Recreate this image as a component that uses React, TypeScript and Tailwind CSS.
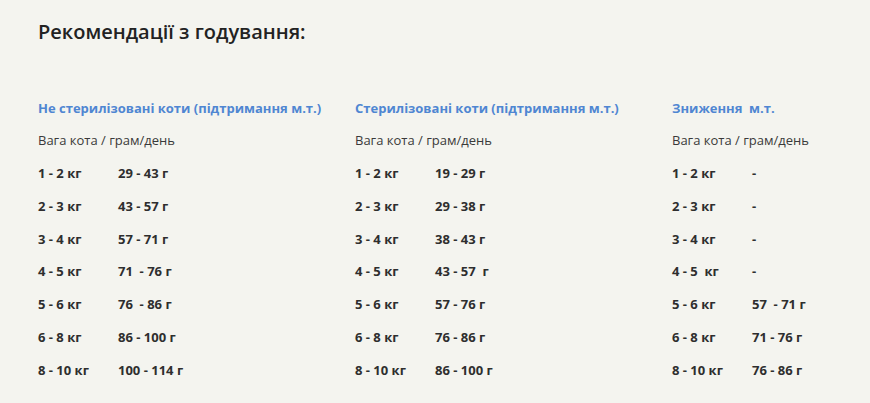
const columns = [
  {
    title: "Не стерилізовані коти (підтримання м.т.)",
    rows: [
      ["1 - 2 кг", "29 - 43 г"],
      ["2 - 3 кг", "43 - 57 г"],
      ["3 - 4 кг", "57 - 71 г"],
      ["4 - 5 кг", "71  - 76 г"],
      ["5 - 6 кг", "76  - 86 г"],
      ["6 - 8 кг", "86 - 100 г"],
      ["8 - 10 кг", "100 - 114 г"],
    ],
  },
  {
    title: "Стерилізовані коти (підтримання м.т.)",
    rows: [
      ["1 - 2 кг", "19 - 29 г"],
      ["2 - 3 кг", "29 - 38 г"],
      ["3 - 4 кг", "38 - 43 г"],
      ["4 - 5 кг", "43 - 57  г"],
      ["5 - 6 кг", "57 - 76 г"],
      ["6 - 8 кг", "76 - 86 г"],
      ["8 - 10 кг", "86 - 100 г"],
    ],
  },
  {
    title: "Зниження  м.т.",
    rows: [
      ["1 - 2 кг", "-"],
      ["2 - 3 кг", "-"],
      ["3 - 4 кг", "-"],
      ["4 - 5  кг", "-"],
      ["5 - 6 кг", "57  - 71 г"],
      ["6 - 8 кг", "71 - 76 г"],
      ["8 - 10 кг", "76 - 86 г"],
    ],
  },
];

export default function App() {
  return (
    <div className="w-[870px] h-[403px] overflow-hidden bg-[#f4f4ef] pl-[38px] pt-[18px] font-['Open_Sans',sans-serif] text-[#333]">
      <h2 className="text-[20px] font-semibold leading-[27px] text-[#222]">Рекомендації з годування:</h2>

      <div className="mt-[54px] grid grid-cols-[317px_317px_1fr]">
        {columns.map((col) => (
          <div key={col.title}>
            <h3 className="text-[13px] font-bold leading-[18px] text-[#4f86d2] whitespace-pre">{col.title}</h3>
            <p className="mt-[14px] text-[13px] leading-[18px] text-[#3a3a3a]">Вага кота / грам/день</p>
            <div className="mt-[15px] flex flex-col gap-[14.8px]">
              {col.rows.map(([w, g]) => (
                <div key={w} className="flex text-[13px] font-bold leading-[18px] text-[#2e2e2e]">
                  <span className="w-[80px] whitespace-pre">{w}</span>
                  <span className="whitespace-pre">{g}</span>
                </div>
              ))}
            </div>
          </div>
        ))}
      </div>
    </div>
  );
}
